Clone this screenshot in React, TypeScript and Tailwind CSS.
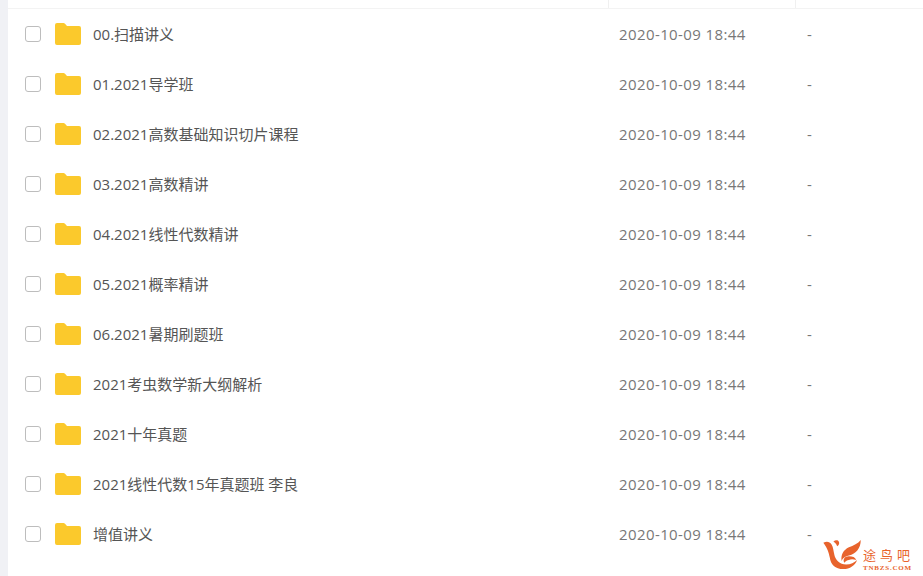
const rows = [
  "00.扫描讲义",
  "01.2021导学班",
  "02.2021高数基础知识切片课程",
  "03.2021高数精讲",
  "04.2021线性代数精讲",
  "05.2021概率精讲",
  "06.2021暑期刷题班",
  "2021考虫数学新大纲解析",
  "2021十年真题",
  "2021线性代数15年真题班 李良",
  "增值讲义",
]

function FolderIcon() {
  return (
    <svg width="26" height="22" viewBox="0 0 26 22" className="block">
      <path
        d="M0 2a2 2 0 0 1 2-2h6.5a2 2 0 0 1 1.5.7L12 3h12a2 2 0 0 1 2 2v15a2 2 0 0 1-2 2H2a2 2 0 0 1-2-2z"
        fill="#fbc92c"
      />
    </svg>
  )
}

function Watermark() {
  return (
    <div className="absolute left-[821px] top-[539px] flex items-start">
      <svg width="43" height="31" viewBox="0 0 44 34">
        <path
          d="M1 4c4-2 7-1 9 2 2 3 2 7 3 11 1 6 6 11 13 11 5 0 9-2 12-5-2 6-8 10-15 10-9 0-14-5-15-13-1-5-2-9-7-16z"
          fill="#e8632c"
        />
        <path d="M42 1c0 9-5 15-13 17-4 1-7 3-8 6-1-7 2-12 8-15 5-2 10-4 13-8z" fill="#e8632c" />
        <path d="M24 26c-2-3 0-7 5-7 4 0 7 1 8 4-3-1-6-1-8 0-2 0-3 1-5 3z" fill="#e8632c" />
        <path d="M12 3c2-2 5-2 6 0 1 2 0 4-2 5 0-2-2-4-4-5z" fill="#e8632c" />
      </svg>
      <div className="-ml-[1px] mt-[6px] flex flex-col items-start text-[#e8632c]">
        <span className="text-[13px] leading-[19px] tracking-[4px] font-['Noto_Sans_CJK_SC',sans-serif]">途鸟吧</span>
        <span className="text-[7px] leading-[8px] font-bold tracking-[0.8px] font-['Liberation_Serif',serif]">TNBZS.COM</span>
      </div>
    </div>
  )
}

export default function App() {
  return (
    <div className="relative h-[576px] w-[923px] overflow-hidden bg-white font-['Open_Sans','Noto_Sans_CJK_SC',sans-serif]">
      <div className="flex h-full">
        <div className="w-[8px] shrink-0 bg-[#f0f1f5]" />
        <div className="flex-1">
          <div className="flex h-[9px] border-b border-[#f3f3f3]">
            <div className="w-[600px]" />
            <div className="w-[188px] border-x border-[#f0f0f0]" />
          </div>
          {rows.map((name) => (
            <div key={name} className="flex h-[50px] items-center">
              <span className="ml-[17px] h-4 w-4 shrink-0 rounded-[3px] border border-[#bdbdbd] bg-white" />
              <span className="ml-[14px] shrink-0">
                <FolderIcon />
              </span>
              <span className="ml-[12px] w-[526px] shrink-0 text-[15px] text-[#555]">{name}</span>
              <span className="w-[188px] shrink-0 text-[15px] tracking-[0.4px] text-[#777]">2020-10-09 18:44</span>
              <span className="text-[15px] text-[#777]">-</span>
            </div>
          ))}
        </div>
      </div>
      <Watermark />
    </div>
  )
}
